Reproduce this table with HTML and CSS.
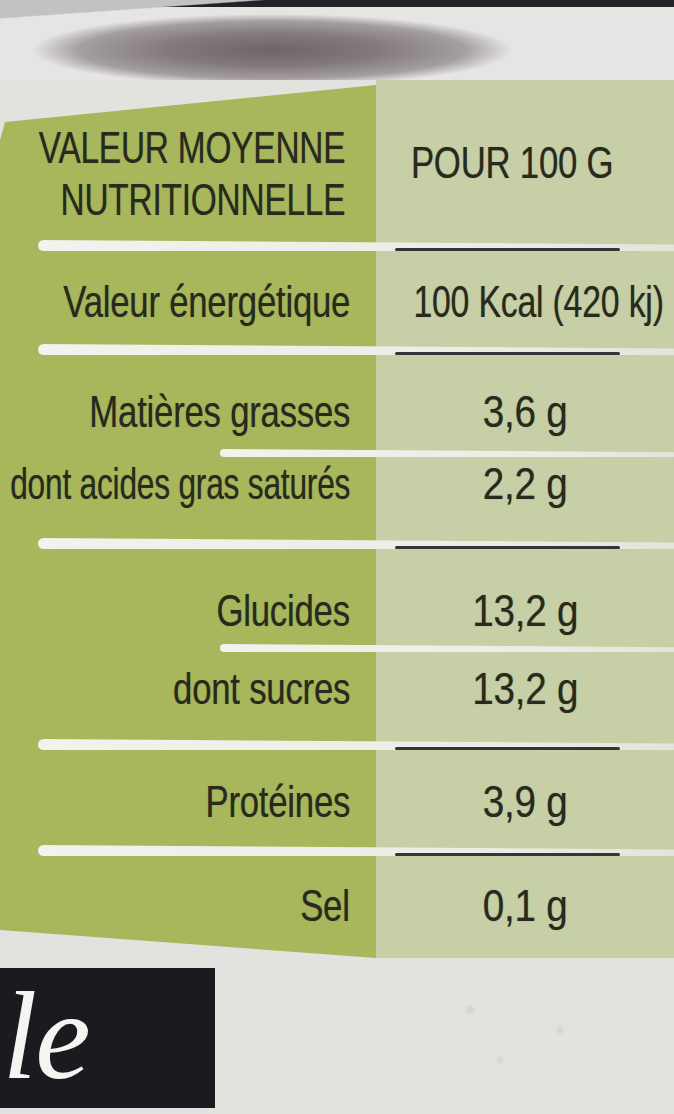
FILE: index.html
```html
<!DOCTYPE html>
<html lang="fr">
<head>
<meta charset="utf-8">
<title>Valeur moyenne nutritionnelle</title>
<link rel="stylesheet" href="styles.css">
</head>
<body>
<div class="photo">
  <div class="lid"></div>
  <div class="label">
    <div class="row head">
      <div class="name"><span class="t">VALEUR MOYENNE<br>NUTRITIONNELLE</span></div>
      <div class="val"><span class="t">POUR 100 G</span></div>
    </div>
    <div class="sep"></div>
    <div class="row energy">
      <div class="name"><span class="t">Valeur énergétique</span></div>
      <div class="val wide"><span class="t">100 Kcal (420 kj)</span></div>
    </div>
    <div class="sep"></div>
    <div class="row fat">
      <div class="name"><span class="t">Matières grasses</span></div>
      <div class="val num"><span class="t">3,6 g</span></div>
    </div>
    <div class="sep sub"></div>
    <div class="row sat">
      <div class="name tight"><span class="t">dont acides gras saturés</span></div>
      <div class="val num"><span class="t">2,2 g</span></div>
    </div>
    <div class="sep"></div>
    <div class="row carb">
      <div class="name"><span class="t">Glucides</span></div>
      <div class="val num"><span class="t">13,2 g</span></div>
    </div>
    <div class="sep sub"></div>
    <div class="row sugar">
      <div class="name"><span class="t">dont sucres</span></div>
      <div class="val num"><span class="t">13,2 g</span></div>
    </div>
    <div class="sep"></div>
    <div class="row prot">
      <div class="name"><span class="t">Protéines</span></div>
      <div class="val num"><span class="t">3,9 g</span></div>
    </div>
    <div class="sep"></div>
    <div class="row salt">
      <div class="name"><span class="t">Sel</span></div>
      <div class="val num"><span class="t">0,1 g</span></div>
    </div>
  </div>
  <div class="bottom">
    <div class="brand"><span>ale</span></div>
  </div>
</div>
</body>
</html>
```

FILE: styles.css
```css
* { box-sizing: border-box; }
html, body { margin: 0; padding: 0; }
body {
  width: 674px;
  height: 1114px;
  overflow: hidden;
  background: #e1e1de;
  font-family: "Liberation Sans", Arial, sans-serif;
}
.photo {
  width: 674px;
  height: 1114px;
  overflow: hidden;
  background:
    radial-gradient(circle 6px at 470px 1010px, rgba(190,160,150,0.35), rgba(0,0,0,0)),
    radial-gradient(circle 5px at 560px 1030px, rgba(190,160,150,0.35), rgba(0,0,0,0)),
    radial-gradient(circle 5px at 500px 1060px, rgba(190,160,150,0.3), rgba(0,0,0,0)),
    #e2e2df;
}
.lid {
  height: 80px;
  background:
    radial-gradient(ellipse 240px 36px at 272px 50px, #6f6567 0%, #837a7c 45%, #a49e9f 80%, rgba(225,225,225,0) 100%),
    linear-gradient(176deg, #c2c2c5 0 14%, rgba(0,0,0,0) 15%),
    linear-gradient(to bottom, #232327 0 7px, rgba(0,0,0,0) 7px),
    #e5e5e3;
}
.label {
  height: 878px;
  background: linear-gradient(to right, #a8b75c 0 376px, #c7cfa6 376px 100%);
  clip-path: polygon(5px 42px, 376px 5px, 376px 0, 100% 0, 100% 100%, 376px 100%, 0 calc(100% - 28px), 0 60px);
  color: #272a1c;
}
.row {
  display: grid;
  grid-template-columns: 376px 1fr;
  font-size: 44px;
  line-height: 42px;
  letter-spacing: -0.3px;
  text-shadow: 0 0 1px rgba(40, 40, 28, 0.45);
}
.name {
  display: flex;
  justify-content: flex-end;
  padding-right: 26px;
  white-space: nowrap;
  text-align: right;
}
.val {
  display: flex;
  justify-content: center;
  white-space: nowrap;
}
.t {
  display: inline-block;
  transform: scaleX(0.79);
}
.name .t { transform-origin: 100% 50%; }
.val .t { transform-origin: 50% 50%; }
.name.tight .t { transform: scaleX(0.72); }
.val.num .t { transform: scaleX(0.88); }
.val.wide { padding-right: 6px; }
.val.wide .t { transform: scaleX(0.77); }

.head { height: 160px; }
.head .name { padding-top: 42px; line-height: 52px; padding-right: 31px; }
.head .name .t { transform: scaleX(0.76); }
.head .val { padding-top: 57px; line-height: 52px; padding-right: 26px; }

.energy { padding-top: 30px; height: 93px; }
.fat { padding-top: 36px; height: 94px; }
.sat { padding-top: 6px; height: 81px; }
.carb { padding-top: 41px; height: 95px; }
.sugar { padding-top: 16px; height: 87px; }
.prot { padding-top: 31px; height: 95px; }
.salt { padding-top: 29px; height: 103px; }

.sep {
  position: relative;
  height: 11px;
  margin-left: 38px;
  background: linear-gradient(to right, #f2f2ee, #ecede6 70%, #e3e5da);
  border-radius: 6px 0 0 6px;
  clip-path: polygon(0 0, 100% 40%, 100% 100%, 0 100%);
}
.sep::after {
  content: "";
  position: absolute;
  left: 357px;
  width: 225px;
  bottom: 0;
  height: 3px;
  background: #36333b;
  border-radius: 2px;
}
.sep.sub {
  margin-left: 220px;
  height: 8px;
}
.sep.sub::after { display: none; }

.bottom {
  padding-top: 10px;
}
.brand {
  width: 215px;
  height: 140px;
  background: #1d1a1f;
  overflow: hidden;
}
.brand span {
  display: block;
  margin-left: -58px;
  padding-top: 6px;
  font-family: "Liberation Serif", "DejaVu Serif", serif;
  font-style: italic;
  font-size: 125px;
  line-height: 125px;
  letter-spacing: -2px;
  color: #f4f4f2;
}
```
